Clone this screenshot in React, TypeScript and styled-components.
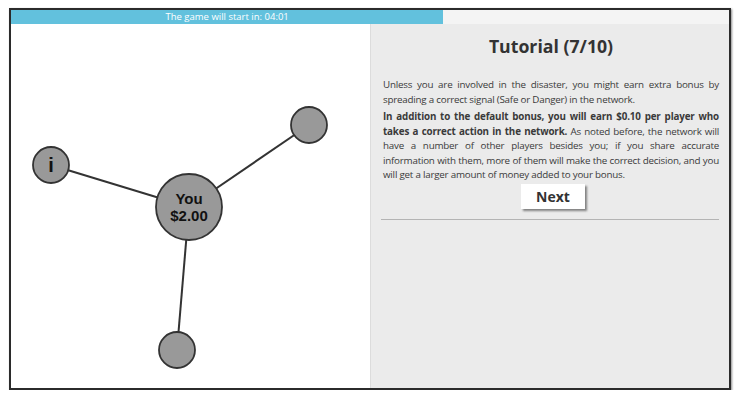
import styled, { createGlobalStyle } from 'styled-components';

const GlobalStyle = createGlobalStyle`
  html, body {
    margin: 0;
    padding: 0;
    background: #ffffff;
  }
`;

const Page = styled.div`
  padding: 8px 0 0 9px;
  font-family: "Open Sans", "Liberation Sans", sans-serif;
`;

const Frame = styled.div`
  width: 718px;
  height: 378px;
  border: 2px solid #2b2b2b;
  box-shadow: 1px 1px 2px rgba(0, 0, 0, 0.45);
  display: flex;
  flex-direction: column;
  background: #ffffff;
  overflow: hidden;
`;

const ProgressTrack = styled.div`
  height: 14px;
  flex: none;
  background: #f4f4f4;
  display: flex;
`;

const ProgressFill = styled.div<{ $pct: number }>`
  width: ${(p) => p.$pct}%;
  background: #62c1dd;
  color: #ffffff;
  font-size: 9.5px;
  line-height: 14px;
  text-align: center;
  white-space: nowrap;
`;

const Body = styled.div`
  flex: 1;
  min-height: 0;
  display: grid;
  grid-template-columns: 359px 1fr;
`;

const GraphPane = styled.div`
  background: #ffffff;

  svg {
    display: block;
  }
`;

const TutorialPane = styled.div`
  background: #ebebeb;
  border-left: 1px solid #dcdcdc;
  padding: 12px 10px 0 12px;
  color: #333333;
`;

const Title = styled.h1`
  margin: 0;
  font-size: 17.7px;
  line-height: 20px;
  font-weight: 700;
  text-align: center;
  color: #333333;
`;

const Para = styled.p<{ $first?: boolean }>`
  margin: ${(p) => (p.$first ? '22px' : '3px')} 0 0;
  font-size: 9.8px;
  letter-spacing: -0.22px;
  line-height: 14.5px;
  text-align: justify;
  color: #3a3a3a;

  b {
    letter-spacing: -0.15px;
  }
`;

const ButtonRow = styled.div`
  display: flex;
  justify-content: center;
  margin-top: 1px;
`;

const NextButton = styled.button`
  width: 64px;
  height: 25px;
  border: none;
  background: #ffffff;
  box-shadow: 2px 2px 2px rgba(0, 0, 0, 0.45);
  font-family: "Open Sans", "Liberation Sans", sans-serif;
  font-size: 14px;
  font-weight: 700;
  color: #333333;
  padding: 0;
  margin-left: 4px;
`;

const Rule = styled.hr`
  margin: 10px 0 0 -2px;
  border: none;
  border-top: 1px solid #b4b4b4;
`;

type Node = { x: number; y: number; r: number; label?: string[] };

const center: Node = { x: 178, y: 183, r: 33, label: ['You', '$2.00'] };
const others: Node[] = [
  { x: 40, y: 141, r: 18, label: ['i'] },
  { x: 298, y: 101, r: 18 },
  { x: 166, y: 326, r: 18 },
];

const Graph = () => (
  <svg width="359" height="364" viewBox="0 0 359 364">
    {others.map((n, i) => (
      <line key={i} x1={center.x} y1={center.y} x2={n.x} y2={n.y} stroke="#333" strokeWidth="2" />
    ))}
    {[center, ...others].map((n, i) => (
      <g key={i}>
        <circle cx={n.x} cy={n.y} r={n.r} fill="#999999" stroke="#333" strokeWidth="1.8" />
        {n.label && n.label.length === 1 && (
          <text
            x={n.x}
            y={n.y + 7}
            textAnchor="middle"
            fontFamily="'Liberation Sans', Arial, sans-serif"
            fontWeight="700"
            fontSize="20"
            fill="#111"
          >
            {n.label[0]}
          </text>
        )}
        {n.label && n.label.length === 2 && (
          <text
            textAnchor="middle"
            fontFamily="'Liberation Sans', Arial, sans-serif"
            fontWeight="700"
            fontSize="15"
            fill="#111"
          >
            <tspan x={n.x} y={n.y - 3}>{n.label[0]}</tspan>
            <tspan x={n.x} y={n.y + 14}>{n.label[1]}</tspan>
          </text>
        )}
      </g>
    ))}
  </svg>
);

const App = () => {
  return (
    <Page>
      <GlobalStyle />
      <Frame>
        <ProgressTrack>
          <ProgressFill $pct={60.2}>The game will start in: 04:01</ProgressFill>
        </ProgressTrack>
        <Body>
          <GraphPane>
            <Graph />
          </GraphPane>
          <TutorialPane>
            <Title>Tutorial (7/10)</Title>
            <Para $first>
              Unless you are involved in the disaster, you might earn extra bonus by spreading a
              correct signal (Safe or Danger) in the network.
            </Para>
            <Para>
              <b>
                In addition to the default bonus, you will earn $0.10 per player who takes a
                correct action in the network.
              </b>{' '}
              As noted before, the network will have a number of other players besides you; if you
              share accurate information with them, more of them will make the correct decision,
              and you will get a larger amount of money added to your bonus.
            </Para>
            <ButtonRow>
              <NextButton>Next</NextButton>
            </ButtonRow>
            <Rule />
          </TutorialPane>
        </Body>
      </Frame>
    </Page>
  );
};

export default App;
